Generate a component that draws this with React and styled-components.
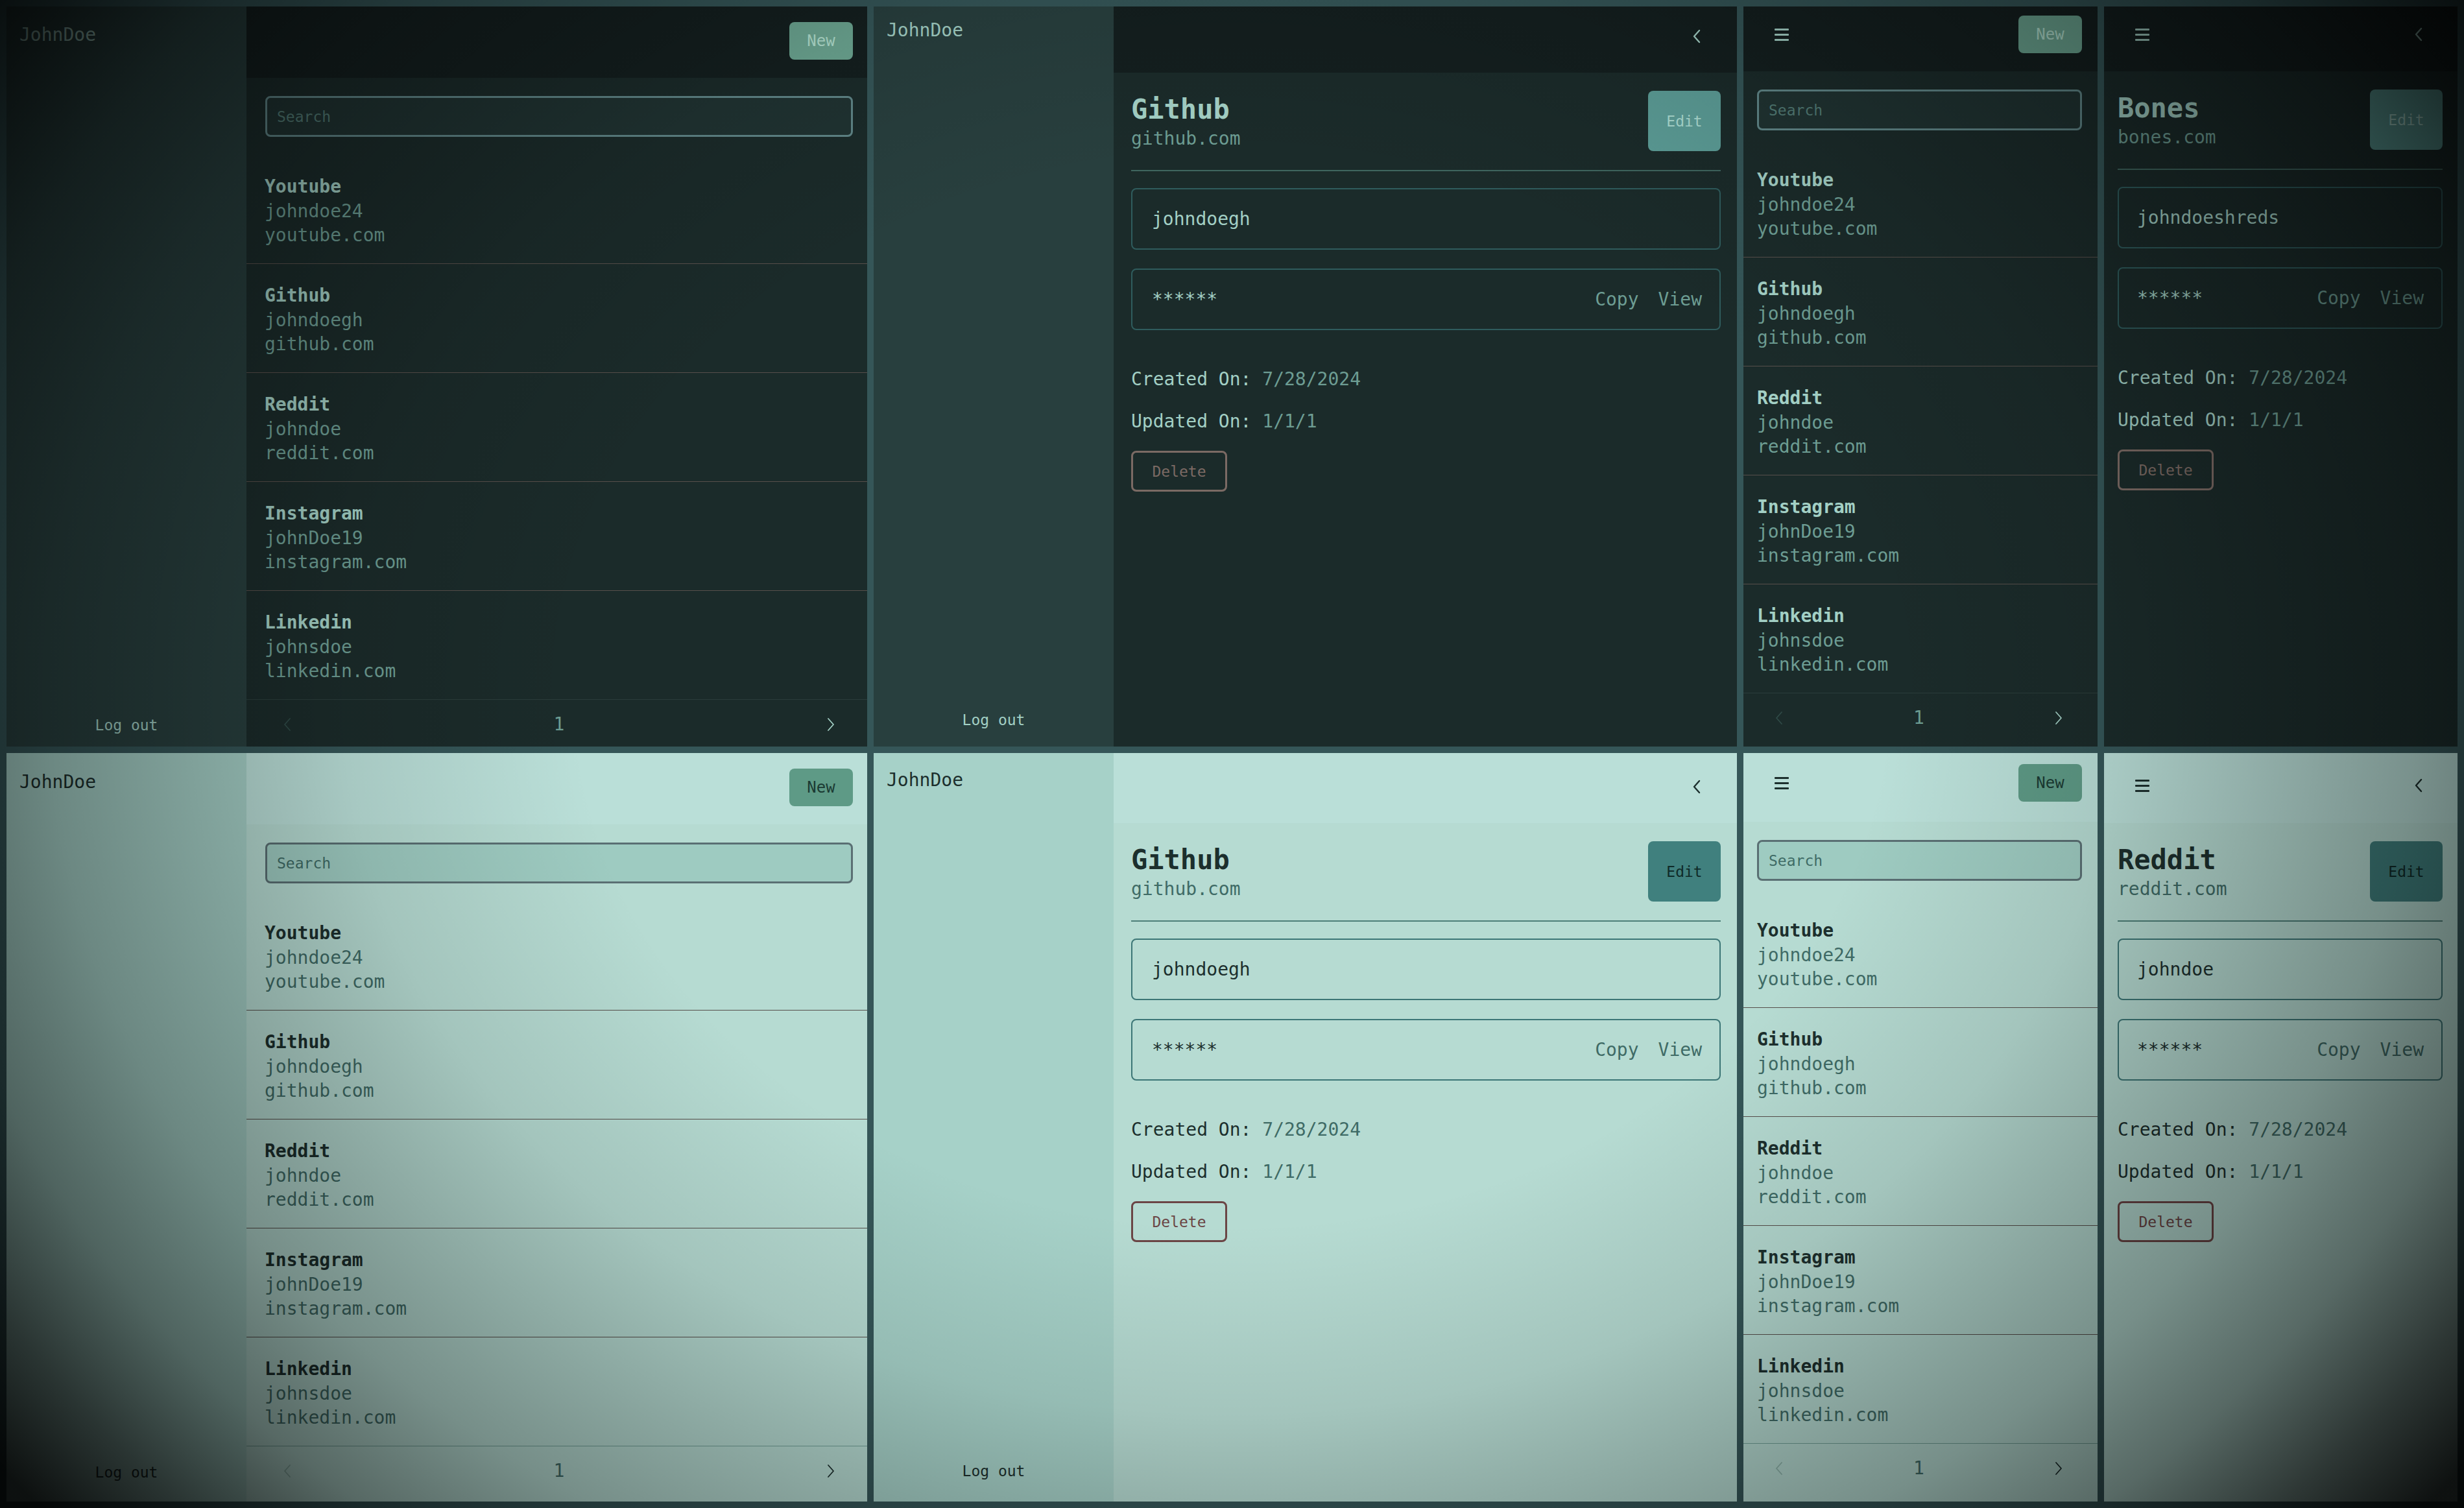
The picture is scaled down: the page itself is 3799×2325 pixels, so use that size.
import React from "react";
import styled, { createGlobalStyle, ThemeProvider } from "styled-components";

const dark = {
  sidebar: "#283f3e",
  header: "#141f1f",
  body: "#1b2b2a",
  text: "#a3d0c5",
  muted: "#6d9d93",
  dim: "#2f4a47",
  newBg: "#6ca692",
  newText: "#b3e0d0",
  searchBg: "#203332",
  searchBorder: "#608688",
  placeholder: "#527b75",
  rowLine: "#525c55",
  footLine: "#2b3d3b",
  editBg: "#5c9d97",
  editText: "#acdcd2",
  rule: "#3f665f",
  fieldLine: "#2f5c5d",
  danger: "#7b6a64",
};

const light = {
  sidebar: "#a6d1c8",
  header: "#badfd8",
  body: "#b6dbd2",
  text: "#1c2f2d",
  muted: "#3f6b66",
  dim: "#8db3aa",
  newBg: "#5e9a86",
  newText: "#1b3a33",
  searchBg: "#9ecbc1",
  searchBorder: "#5a6f73",
  placeholder: "#3f6b66",
  rowLine: "#574f4b",
  footLine: "#72a198",
  editBg: "#40807e",
  editText: "#0f2a28",
  rule: "#4d7f78",
  fieldLine: "#3c7676",
  danger: "#6b4545",
};

const desktop = {
  searchLeft: 29,
  searchRight: 22,
  entryLeft: 28,
  pagerLeft: 56,
  pagerRight: 49,
  detailLeft: 27,
  detailRight: 25,
  fieldLeft: 30,
};

const mobile = {
  searchLeft: 21,
  searchRight: 24,
  entryLeft: 21,
  pagerLeft: 48,
  pagerRight: 53,
  detailLeft: 21,
  detailRight: 23,
  fieldLeft: 28,
};

const entries = [
  { site: "Youtube", user: "johndoe24", url: "youtube.com" },
  { site: "Github", user: "johndoegh", url: "github.com" },
  { site: "Reddit", user: "johndoe", url: "reddit.com" },
  { site: "Instagram", user: "johnDoe19", url: "instagram.com" },
  { site: "Linkedin", user: "johnsdoe", url: "linkedin.com" },
];

const GlobalStyle = createGlobalStyle`
  * { box-sizing: border-box; }
  html, body {
    margin: 0;
    padding: 0;
    background: #355658;
  }
  body {
    font-family: "DejaVu Sans Mono", "Liberation Mono", monospace;
  }
`;

function MenuIcon() {
  return (
    <svg width="22" height="19" viewBox="0 0 22 19" fill="currentColor">
      <rect x="0" y="0" width="22" height="3" rx="1" />
      <rect x="0" y="8" width="22" height="3" rx="1" />
      <rect x="0" y="16" width="22" height="3" rx="1" />
    </svg>
  );
}

function Chevron({ flip, weight = 2.4 }) {
  return (
    <svg width="14" height="22" viewBox="0 0 14 22" fill="none">
      <polyline
        points={flip ? "3,2 11,11 3,20" : "11,2 3,11 11,20"}
        stroke="currentColor"
        strokeWidth={weight}
        strokeLinecap="round"
        strokeLinejoin="round"
      />
    </svg>
  );
}

function Side({ top, bottom }) {
  return (
    <Sidebar $top={top} $bottom={bottom}>
      <UserName>JohnDoe</UserName>
      <LogOut>Log out</LogOut>
    </Sidebar>
  );
}

function EntryList({ layout }) {
  return (
    <>
      <SearchRow $left={layout.searchLeft} $right={layout.searchRight}>
        <Search placeholder="Search" />
      </SearchRow>
      <Entries>
        {entries.map((item) => (
          <Entry key={item.site} $left={layout.entryLeft}>
            <EntryTitle>{item.site}</EntryTitle>
            <EntryLine>{item.user}</EntryLine>
            <EntryLine>{item.url}</EntryLine>
          </Entry>
        ))}
      </Entries>
      <Pager $left={layout.pagerLeft} $right={layout.pagerRight}>
        <PageArrow $off>
          <Chevron weight={1.8} />
        </PageArrow>
        <PageNumber>1</PageNumber>
        <PageArrow>
          <Chevron flip weight={1.8} />
        </PageArrow>
      </Pager>
    </>
  );
}

function Detail({ layout, record }) {
  return (
    <DetailBody $left={layout.detailLeft} $right={layout.detailRight}>
      <TitleRow>
        <TitleBlock>
          <Title>{record.site}</Title>
          <SubTitle>{record.url}</SubTitle>
        </TitleBlock>
        <EditButton>Edit</EditButton>
      </TitleRow>
      <Field $left={layout.fieldLeft}>
        <FieldText>{record.user}</FieldText>
      </Field>
      <Field $left={layout.fieldLeft} $gap={29}>
        <FieldText>******</FieldText>
        <Actions>
          <Action>Copy</Action>
          <Action>View</Action>
        </Actions>
      </Field>
      <Meta $gap={57}>
        <MetaLabel>Created On:</MetaLabel> <MetaValue>7/28/2024</MetaValue>
      </Meta>
      <Meta $gap={28}>
        <MetaLabel>Updated On:</MetaLabel> <MetaValue>1/1/1</MetaValue>
      </Meta>
      <DeleteButton>Delete</DeleteButton>
    </DetailBody>
  );
}

function DesktopList({ cfg }) {
  return (
    <Panel>
      <Side top={cfg.sideTop} bottom={cfg.sideBottom} />
      <Main>
        <TopBar $h={cfg.barH} $t={cfg.barT} $right={22}>
          <NewButton>New</NewButton>
        </TopBar>
        <EntryList layout={desktop} />
      </Main>
    </Panel>
  );
}

function DesktopDetail({ cfg, record }) {
  return (
    <Panel>
      <Side top={cfg.sideTop} bottom={cfg.sideBottom} />
      <Main>
        <TopBar $h={cfg.barH} $t={cfg.barT} $right={55}>
          <Slot>
            <Chevron />
          </Slot>
        </TopBar>
        <Detail layout={desktop} record={record} />
      </Main>
    </Panel>
  );
}

function MobileList({ cfg }) {
  return (
    <Panel>
      <Main>
        <TopBar $h={cfg.barH} $t={cfg.barT} $left={48} $right={24}>
          <Slot>
            <MenuIcon />
          </Slot>
          <NewButton>New</NewButton>
        </TopBar>
        <EntryList layout={mobile} />
      </Main>
    </Panel>
  );
}

function MobileDetail({ cfg, record }) {
  return (
    <Panel>
      <Main>
        <TopBar $h={cfg.barH} $t={cfg.barT} $left={48} $right={53}>
          <Slot>
            <MenuIcon />
          </Slot>
          <Slot>
            <Chevron />
          </Slot>
        </TopBar>
        <Detail layout={mobile} record={record} />
      </Main>
    </Panel>
  );
}

const github = { site: "Github", url: "github.com", user: "johndoegh" };
const bones = { site: "Bones", url: "bones.com", user: "johndoeshreds" };
const reddit = { site: "Reddit", url: "reddit.com", user: "johndoe" };

export default function App() {
  return (
    <>
      <GlobalStyle />
      <Frame>
        <ThemeProvider theme={dark}>
          <DesktopList cfg={{ sideTop: 25, sideBottom: 18, barH: 110, barT: 24 }} />
          <DesktopDetail
            cfg={{ sideTop: 18, sideBottom: 26, barH: 102, barT: 17 }}
            record={github}
          />
          <MobileList cfg={{ barH: 100, barT: 14 }} />
          <MobileDetail cfg={{ barH: 100, barT: 14 }} record={bones} />
        </ThemeProvider>
        <ThemeProvider theme={light}>
          <DesktopList cfg={{ sideTop: 26, sideBottom: 30, barH: 110, barT: 24 }} />
          <DesktopDetail
            cfg={{ sideTop: 23, sideBottom: 32, barH: 108, barT: 23 }}
            record={github}
          />
          <MobileList cfg={{ barH: 106, barT: 17 }} />
          <MobileDetail cfg={{ barH: 108, barT: 21 }} record={reddit} />
        </ThemeProvider>
        <Vignette />
      </Frame>
    </>
  );
}

const Frame = styled.div`
  position: relative;
  width: 3799px;
  height: 2325px;
  padding: 10px;
  display: grid;
  grid-template-columns: 1327px 1331px 546px 545px;
  grid-template-rows: 1141px 1154px;
  gap: 10px;
  background: #355658;
  overflow: hidden;
`;

const Vignette = styled.div`
  position: absolute;
  inset: 0;
  pointer-events: none;
  background: radial-gradient(
    ellipse 2400px 1950px at 50% 46%,
    rgba(0, 0, 0, 0) 42%,
    rgba(0, 0, 0, 0.1) 57%,
    rgba(0, 0, 0, 0.22) 66%,
    rgba(0, 0, 0, 0.35) 76%,
    rgba(0, 0, 0, 0.52) 85%,
    rgba(0, 0, 0, 0.75) 93%,
    rgba(0, 0, 0, 0.92) 100%
  );
`;

const Panel = styled.section`
  display: flex;
  min-width: 0;
  overflow: hidden;
  background: ${(p) => p.theme.body};
`;

const Sidebar = styled.aside`
  width: 370px;
  flex-shrink: 0;
  display: flex;
  flex-direction: column;
  justify-content: space-between;
  padding: ${(p) => p.$top}px 20px ${(p) => p.$bottom}px;
  background: ${(p) => p.theme.sidebar};
`;

const UserName = styled.div`
  font-size: 28px;
  line-height: 37px;
  color: ${(p) => p.theme.text};
`;

const LogOut = styled.button`
  align-self: center;
  padding: 0;
  border: none;
  background: none;
  font-family: inherit;
  font-size: 23px;
  line-height: 30px;
  color: ${(p) => p.theme.text};
`;

const Main = styled.main`
  flex: 1;
  min-width: 0;
  display: flex;
  flex-direction: column;
`;

const TopBar = styled.header`
  flex-shrink: 0;
  height: ${(p) => p.$h}px;
  display: flex;
  align-items: flex-start;
  justify-content: ${(p) => (p.$left ? "space-between" : "flex-end")};
  padding: ${(p) => p.$t}px ${(p) => p.$right}px 0 ${(p) => p.$left || 0}px;
  background: ${(p) => p.theme.header};
  color: ${(p) => p.theme.text};
`;

const Slot = styled.div`
  height: 58px;
  display: flex;
  align-items: center;
`;

const NewButton = styled.button`
  width: 98px;
  height: 58px;
  border: none;
  border-radius: 8px;
  background: ${(p) => p.theme.newBg};
  color: ${(p) => p.theme.newText};
  font-family: inherit;
  font-size: 24px;
`;

const SearchRow = styled.div`
  flex-shrink: 0;
  padding: 28px ${(p) => p.$right}px 28px ${(p) => p.$left}px;
`;

const Search = styled.input`
  display: block;
  width: 100%;
  height: 63px;
  padding: 0 15px;
  border: 3px solid ${(p) => p.theme.searchBorder};
  border-radius: 8px;
  background: ${(p) => p.theme.searchBg};
  font-family: inherit;
  font-size: 23px;
  color: ${(p) => p.theme.text};
  outline: none;

  &::placeholder {
    color: ${(p) => p.theme.placeholder};
    opacity: 1;
  }
`;

const Entries = styled.ul`
  flex-shrink: 0;
  margin: 0;
  padding: 0;
  list-style: none;
`;

const Entry = styled.li`
  padding: 30px 22px 24.5px ${(p) => p.$left}px;

  & + & {
    border-top: 1px solid ${(p) => p.theme.rowLine};
  }
`;

const EntryTitle = styled.div`
  font-size: 28px;
  line-height: 37.5px;
  font-weight: 700;
  color: ${(p) => p.theme.text};
`;

const EntryLine = styled.div`
  font-size: 28px;
  line-height: 37.5px;
  color: ${(p) => p.theme.muted};
`;

const Pager = styled.footer`
  flex-shrink: 0;
  height: 76px;
  display: flex;
  align-items: center;
  justify-content: space-between;
  padding: 0 ${(p) => p.$right}px 0 ${(p) => p.$left}px;
  border-top: 1px solid ${(p) => p.theme.footLine};
`;

const PageArrow = styled.span`
  display: flex;
  color: ${(p) => (p.$off ? p.theme.dim : p.theme.text)};
`;

const PageNumber = styled.span`
  font-size: 28px;
  line-height: 37px;
  color: ${(p) => p.theme.muted};
`;

const DetailBody = styled.div`
  display: flex;
  flex-direction: column;
  align-items: flex-start;
  padding: 28px ${(p) => p.$right}px 0 ${(p) => p.$left}px;
`;

const TitleRow = styled.div`
  align-self: stretch;
  display: flex;
  justify-content: space-between;
  align-items: flex-start;
  padding-bottom: 28px;
  border-bottom: 2px solid ${(p) => p.theme.rule};
`;

const TitleBlock = styled.div`
  padding-top: 4px;
`;

const Title = styled.h1`
  margin: 0;
  font-size: 42px;
  line-height: 50px;
  font-weight: 700;
  color: ${(p) => p.theme.text};
`;

const SubTitle = styled.div`
  font-size: 28px;
  line-height: 40px;
  color: ${(p) => p.theme.muted};
`;

const EditButton = styled.button`
  width: 112px;
  height: 93px;
  border: none;
  border-radius: 8px;
  background: ${(p) => p.theme.editBg};
  color: ${(p) => p.theme.editText};
  font-family: inherit;
  font-size: 23px;
`;

const Field = styled.div`
  align-self: stretch;
  height: 95px;
  margin-top: ${(p) => p.$gap || 26}px;
  display: flex;
  align-items: center;
  justify-content: space-between;
  padding: 0 27px 0 ${(p) => p.$left}px;
  border: 2px solid ${(p) => p.theme.fieldLine};
  border-radius: 8px;
`;

const FieldText = styled.span`
  font-size: 28px;
  color: ${(p) => p.theme.text};
`;

const Actions = styled.div`
  display: flex;
  gap: 30px;
`;

const Action = styled.span`
  font-size: 28px;
  color: ${(p) => p.theme.muted};
`;

const Meta = styled.div`
  margin-top: ${(p) => p.$gap}px;
  font-size: 28px;
  line-height: 37px;
  white-space: pre;
`;

const MetaLabel = styled.span`
  color: ${(p) => p.theme.text};
`;

const MetaValue = styled.span`
  color: ${(p) => p.theme.muted};
`;

const DeleteButton = styled.button`
  margin-top: 27px;
  width: 148px;
  height: 63px;
  border: 3px solid ${(p) => p.theme.danger};
  border-radius: 8px;
  background: none;
  color: ${(p) => p.theme.danger};
  font-family: inherit;
  font-size: 23px;
`;
